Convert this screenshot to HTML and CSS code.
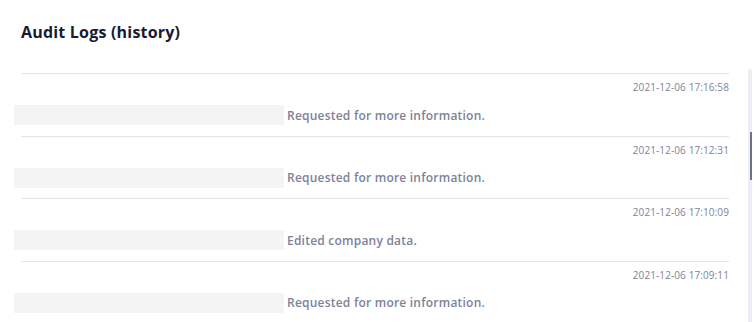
FILE: index.html
```html
<!DOCTYPE html>
<html lang="en">
<head>
<meta charset="utf-8">
<title>Audit Logs</title>
<link rel="stylesheet" href="styles.css">
</head>
<body>
<div class="card">
  <div class="card-header">
    <h3 class="card-title">Audit Logs (history)</h3>
  </div>
  <div class="card-body">
    <div class="log-list">
      <div class="log-row">
        <div class="log-sep"></div>
        <div class="log-time">2021-12-06 17:16:58</div>
        <div class="log-entry"><span class="log-user"></span><span class="log-msg">Requested for more information.</span></div>
      </div>
      <div class="log-row">
        <div class="log-sep"></div>
        <div class="log-time">2021-12-06 17:12:31</div>
        <div class="log-entry"><span class="log-user"></span><span class="log-msg">Requested for more information.</span></div>
      </div>
      <div class="log-row">
        <div class="log-sep"></div>
        <div class="log-time">2021-12-06 17:10:09</div>
        <div class="log-entry"><span class="log-user"></span><span class="log-msg">Edited company data.</span></div>
      </div>
      <div class="log-row">
        <div class="log-sep"></div>
        <div class="log-time">2021-12-06 17:09:11</div>
        <div class="log-entry"><span class="log-user"></span><span class="log-msg">Requested for more information.</span></div>
      </div>
    </div>
    <div class="scroll-track"><div class="scroll-thumb"></div></div>
  </div>
</div>
</body>
</html>
```

FILE: styles.css
```css
html, body {
  margin: 0;
  padding: 0;
  background: #ffffff;
}
body {
  font-family: "Open Sans", "Noto Sans", sans-serif;
  width: 754px;
  height: 322px;
  overflow: hidden;
}
.card {
  display: flex;
  flex-direction: column;
}
.card-header {
  height: 69px;
  padding: 20px 0 0 21px;
  box-sizing: border-box;
}
.card-title {
  margin: 0;
  font-size: 16px;
  line-height: 24px;
  font-weight: 700;
  color: #181c32;
  letter-spacing: 0.2px;
}
.card-body {
  display: flex;
  align-items: flex-start;
}
.log-list {
  flex: 1;
  padding: 4px 19px 0 14px;
}
.log-row {
  height: 62.5px;
  display: flex;
  flex-direction: column;
}
.log-sep {
  height: 1px;
  margin-left: 7px;
  background: #e2e4ec;
}
.log-time {
  margin-top: 6px;
  text-align: right;
  font-size: 10px;
  line-height: 14px;
  color: #7e8299;
  letter-spacing: 0.1px;
}
.log-entry {
  display: flex;
  align-items: center;
  margin-top: 11px;
  height: 20px;
}
.log-user {
  width: 270px;
  height: 20px;
  background: #f4f4f4;
}
.log-msg {
  padding-left: 3px;
  font-size: 12px;
  font-weight: 600;
  color: #7e8299;
  letter-spacing: 0.22px;
}
.scroll-track {
  width: 4px;
  height: 260px;
  margin-right: 2px;
  background: #eceef6;
  border-radius: 2px 2px 0 0;
  display: flex;
  justify-content: flex-end;
}
.scroll-thumb {
  width: 2px;
  height: 48px;
  margin-top: 63px;
  background: #6d7086;
}
```
